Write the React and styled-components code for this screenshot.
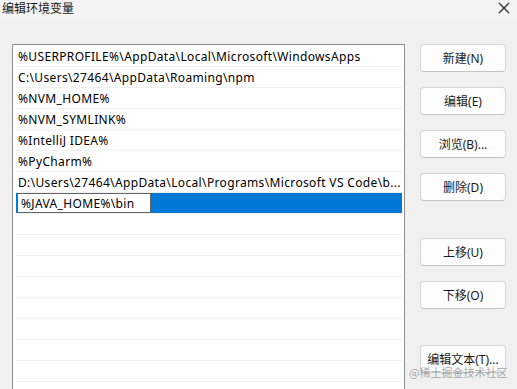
import React from "react";
import styled, { createGlobalStyle } from "styled-components";

const Global = createGlobalStyle`
  html, body { margin: 0; padding: 0; }
  body {
    width: 517px;
    height: 389px;
    overflow: hidden;
    background: #f0f0f0;
    font-family: "Noto Sans", "Noto Sans CJK SC", sans-serif;
    font-size: 12px;
    color: #000;
  }
`;

const Window = styled.div`
  position: relative;
  width: 517px;
  height: 389px;
  overflow: hidden;
  background: #f0f0f0;
`;

const TitleBar = styled.div`
  height: 22px;
  display: flex;
  align-items: flex-start;
  justify-content: space-between;
  background: #f3f3f3;
`;

const Title = styled.div`
  padding: 0 0 0 2px;
  font-family: "Noto Sans CJK SC", sans-serif;
  font-size: 12px;
  line-height: 15px;
  color: #1a1a1a;
`;

const Close = styled.div`
  width: 12px;
  height: 12px;
  margin: 2px 7px 0 0;
  display: flex;
`;

const Body = styled.div`
  display: flex;
  align-items: flex-start;
  padding: 22px 0 0 12px;
`;

const List = styled.div`
  width: 386px;
  height: 360px;
  border: 1px solid #8f8f8f;
  background: #fff;
  padding: 0 2px 0 3px;
  display: flex;
  flex-direction: column;
`;

const Row = styled.div`
  height: 20px;
  flex: none;
  border-bottom: 1px solid #f0f0f0;
  display: flex;
  align-items: center;
  padding-left: 2px;
  white-space: nowrap;
  overflow: hidden;
  letter-spacing: 0.35px;
  background: ${(p) => (p.$selected ? "#0078d7" : "transparent")};
  margin-top: ${(p) => (p.$first ? "1px" : "0")};
`;

const EditBox = styled.div`
  width: 129px;
  height: 18px;
  margin-left: -1px;
  border: 1px solid #646464;
  background: #fff;
  display: flex;
  align-items: center;
  padding-left: 3px;
  letter-spacing: 0.35px;
`;

const Buttons = styled.div`
  display: flex;
  flex-direction: column;
  margin-left: 15px;
`;

const Button = styled.div`
  width: 84px;
  height: 26px;
  margin-top: ${(p) => p.$gap}px;
  border: 1px solid #d5d5d5;
  border-bottom-color: #c4c4c4;
  border-radius: 4px;
  background: #fdfdfd;
  display: flex;
  align-items: center;
  justify-content: center;
  font-family: "Noto Sans", "Noto Sans CJK SC", sans-serif;
  font-size: 12px;
  color: #1b1b1b;
`;

const Watermark = styled.div`
  position: absolute;
  left: 409px;
  top: 365px;
  white-space: nowrap;
  font-family: "Noto Sans CJK SC", sans-serif;
  font-size: 11px;
  line-height: 14px;
  color: rgba(140, 140, 140, 0.75);
`;

const entries = [
  "%USERPROFILE%\\AppData\\Local\\Microsoft\\WindowsApps",
  "C:\\Users\\27464\\AppData\\Roaming\\npm",
  "%NVM_HOME%",
  "%NVM_SYMLINK%",
  "%IntelliJ IDEA%",
  "%PyCharm%",
  "D:\\Users\\27464\\AppData\\Local\\Programs\\Microsoft VS Code\\b...",
];

const buttons = [
  ["新建(N)", 0],
  ["编辑(E)", 15],
  ["浏览(B)...", 15],
  ["删除(D)", 15],
  ["上移(U)", 37],
  ["下移(O)", 15],
  ["编辑文本(T)...", 36],
];

export default function App() {
  return (
    <Window>
      <Global />
      <TitleBar>
        <Title>编辑环境变量</Title>
        <Close>
          <svg width="12" height="12" viewBox="0 0 12 12">
            <path d="M1 1 L11 11 M11 1 L1 11" stroke="#222" strokeWidth="1.1" />
          </svg>
        </Close>
      </TitleBar>
      <Body>
        <List>
          {entries.map((e, i) => (
            <Row key={i} $first={i === 0}>{e}</Row>
          ))}
          <Row $selected>
            <EditBox>%JAVA_HOME%\bin</EditBox>
          </Row>
          {Array.from({ length: 9 }).map((_, i) => (
            <Row key={"e" + i} />
          ))}
        </List>
        <Buttons>
          {buttons.map(([t, g]) => (
            <Button key={t} $gap={g}>{t}</Button>
          ))}
        </Buttons>
      </Body>
      <Watermark>@稀土掘金技术社区</Watermark>
    </Window>
  );
}
